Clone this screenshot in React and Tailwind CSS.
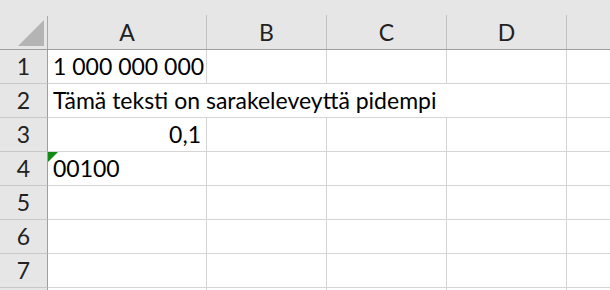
import React from "react";

const font = { fontFamily: "Lato, 'Open Sans', sans-serif" };

function RowHead({ n }) {
  return (
    <div className="w-[48px] shrink-0 h-full bg-[#e6e6e6] border-r border-r-[#9e9e9e] border-b border-b-[#c8c8c8] flex items-center justify-center text-[23px] text-[#222]">
      {n}
    </div>
  );
}

function Cell({ w, children, className = "" }) {
  return (
    <div
      className={`shrink-0 h-full border-r border-b border-[#d4d4d4] flex items-center px-[5px] text-[23px] text-black whitespace-nowrap ${className}`}
      style={{ width: w }}
    >
      {children}
    </div>
  );
}

function Row({ n, cells }) {
  return (
    <div className="flex h-[34px]">
      <RowHead n={n} />
      {cells}
    </div>
  );
}

export default function App() {
  const empty = (k) => [
    <Cell key={k + "b"} w={120} />,
    <Cell key={k + "c"} w={120} />,
    <Cell key={k + "d"} w={120} />,
    <Cell key={k + "e"} w={120} className="border-r-0" />,
  ];
  return (
    <div className="w-[610px] h-[290px] overflow-hidden bg-white" style={font}>
      {/* column header */}
      <div className="flex h-[50px] bg-[#e6e6e6] border-b border-b-[#9e9e9e]">
        <div className="w-[48px] shrink-0 h-full relative border-r border-r-[#a8a8a8] [border-image:linear-gradient(to_bottom,transparent_16px,#a8a8a8_16px)_1]">
          <svg className="absolute left-[18px] top-[20px]" width="26" height="26" viewBox="0 0 26 26">
            <polygon points="26,0 26,26 0,26" fill="#b4b4b4" />
          </svg>
        </div>
        {[["A", 159], ["B", 120], ["C", 120], ["D", 120], ["", 120]].map(([l, w]) => (
          <div
            key={l + w}
            className="shrink-0 h-full flex flex-col"
            style={{ width: w }}
          >
            <div className="h-[16px]" />
            <div className="flex-1 flex items-center justify-center border-r border-r-[#c0c0c0] text-[23px] text-[#222]">
              {l}
            </div>
          </div>
        ))}
      </div>
      <Row n={1} cells={[<Cell key="a" w={159}>1 000 000 000</Cell>, ...empty(1)]} />
      <Row
        n={2}
        cells={[
          <Cell key="a" w={519}>Tämä teksti on sarakeleveyttä pidempi</Cell>,
          <Cell key="e" w={120} className="border-r-0" />,
        ]}
      />
      <Row n={3} cells={[<Cell key="a" w={159} className="justify-end">0,1</Cell>, ...empty(3)]} />
      <Row
        n={4}
        cells={[
          <Cell key="a" w={159} className="relative">
            <svg className="absolute left-0 top-0" width="10" height="10" viewBox="0 0 10 10">
              <polygon points="0,0 10,0 0,10" fill="#138a16" />
            </svg>
            00100
          </Cell>,
          ...empty(4),
        ]}
      />
      <Row n={5} cells={[<Cell key="a" w={159} />, ...empty(5)]} />
      <Row n={6} cells={[<Cell key="a" w={159} />, ...empty(6)]} />
      <Row n={7} cells={[<Cell key="a" w={159} />, ...empty(7)]} />
      <Row n="" cells={[<Cell key="a" w={159} />, ...empty(8)]} />
    </div>
  );
}
